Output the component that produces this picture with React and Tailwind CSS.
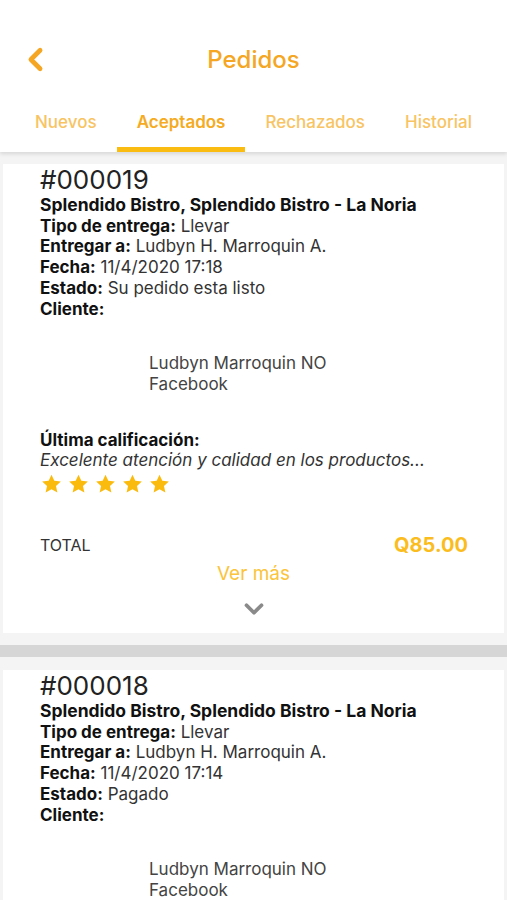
import { ChevronLeft, ChevronDown } from 'lucide-react';

const font = { fontFamily: 'Inter, "Noto Sans", sans-serif' };

const tabs = [
  { label: 'Nuevos' },
  { label: 'Aceptados', active: true },
  { label: 'Rechazados' },
  { label: 'Historial' },
];

const orders = [
  { id: '#000019', fecha: '11/4/2020 17:18', estado: 'Su pedido esta listo', rating: true },
  { id: '#000018', fecha: '11/4/2020 17:14', estado: 'Pagado' },
];

function Star() {
  return (
    <svg width="23" height="22" viewBox="0 0 24 24">
      <path d="M12 1.8l3.1 6.6 7.1.8-5.3 4.9 1.5 7.1L12 17.6l-6.4 3.6 1.5-7.1L1.8 9.2l7.1-.8z" fill="#fbbb0e" />
    </svg>
  );
}

function Row({ label, value }) {
  return (
    <div className="leading-[20.7px]">
      <span className="font-bold text-[#111]">{label}</span>
      {value && <span className="text-[#333]"> {value}</span>}
    </div>
  );
}

function OrderCard({ order }) {
  return (
    <div className="bg-white mx-[3px] pl-[37px] pr-[30px] pt-[2px]">
      <div className="text-[26px] leading-[28px] text-[#222]">{order.id}</div>
      <div className="text-[17px] mt-[1px]">
        <div className="leading-[20.7px] font-bold text-[#111] whitespace-nowrap text-[17.5px]">Splendido Bistro, Splendido Bistro - La Noria</div>
        <Row label="Tipo de entrega:" value="Llevar" />
        <Row label="Entregar a:" value="Ludbyn H. Marroquin A." />
        <Row label="Fecha:" value={order.fecha} />
        <Row label="Estado:" value={order.estado} />
        <Row label="Cliente:" />
        <div className="pl-[109px] pt-[34px] text-[#444] leading-[20.7px]">
          <div>Ludbyn Marroquin NO</div>
          <div>Facebook</div>
        </div>
      </div>
      {order.rating && (
        <div className="text-[17px]">
          <div className="mt-[35px] leading-[20.7px] font-bold text-[#111]">Última calificación:</div>
          <div className="leading-[20.7px] italic text-[#333] whitespace-nowrap">Excelente atención y calidad en los productos...</div>
          <div className="flex gap-[4px] mt-[2px]">
            {[0, 1, 2, 3, 4].map((i) => <Star key={i} />)}
          </div>
          <div className="flex items-center justify-between mt-[38px] h-[24px] pr-[6px]">
            <span className="text-[16px] text-[#333]">TOTAL</span>
            <span className="text-[20px] font-bold text-[#fbbd1e]">Q85.00</span>
          </div>
          <div className="text-center text-[19px] text-[#fbc43a] mt-[4px] leading-[26px] -ml-[37px] -mr-[30px]">Ver más</div>
          <div className="flex justify-center -ml-[37px] -mr-[30px] pt-[7px] pb-[9px]">
            <ChevronDown size={30} strokeWidth={3} color="#8a8a8a" />
          </div>
        </div>
      )}
    </div>
  );
}

export default function App() {
  return (
    <div className="w-[507px] h-[900px] overflow-hidden bg-[#f4f4f4]" style={font}>
      <div className="bg-white relative z-10 shadow-[0_2px_4px_rgba(0,0,0,0.12)]">
        <div className="h-[100px] flex items-center justify-center relative">
          <div className="absolute left-[17px] top-[41px]">
            <ChevronLeft size={37} strokeWidth={3} color="#f5a623" />
          </div>
          <h1 className="text-[24px] font-medium text-[#f5a623] mt-[20px]">Pedidos</h1>
        </div>
        <div className="flex pl-[15px] h-[52px]">
          {tabs.map((t) => (
            <div key={t.label} className="relative px-[20px] flex items-start pt-[10px]">
              <span className={`text-[17px] ${t.active ? 'font-semibold text-[#f5ab22]' : 'font-medium text-[#f8c463]'}`}>{t.label}</span>
              {t.active && <div className="absolute left-0 right-0 bottom-0 h-[5px] bg-[#fbbc12]" />}
            </div>
          ))}
        </div>
      </div>
      <div className="pt-[12px]">
        <OrderCard order={orders[0]} />
        <div className="h-[12px]" />
        <div className="h-[12px] bg-[#d6d6d6]" />
        <div className="h-[13px]" />
        <OrderCard order={orders[1]} />
      </div>
    </div>
  );
}
